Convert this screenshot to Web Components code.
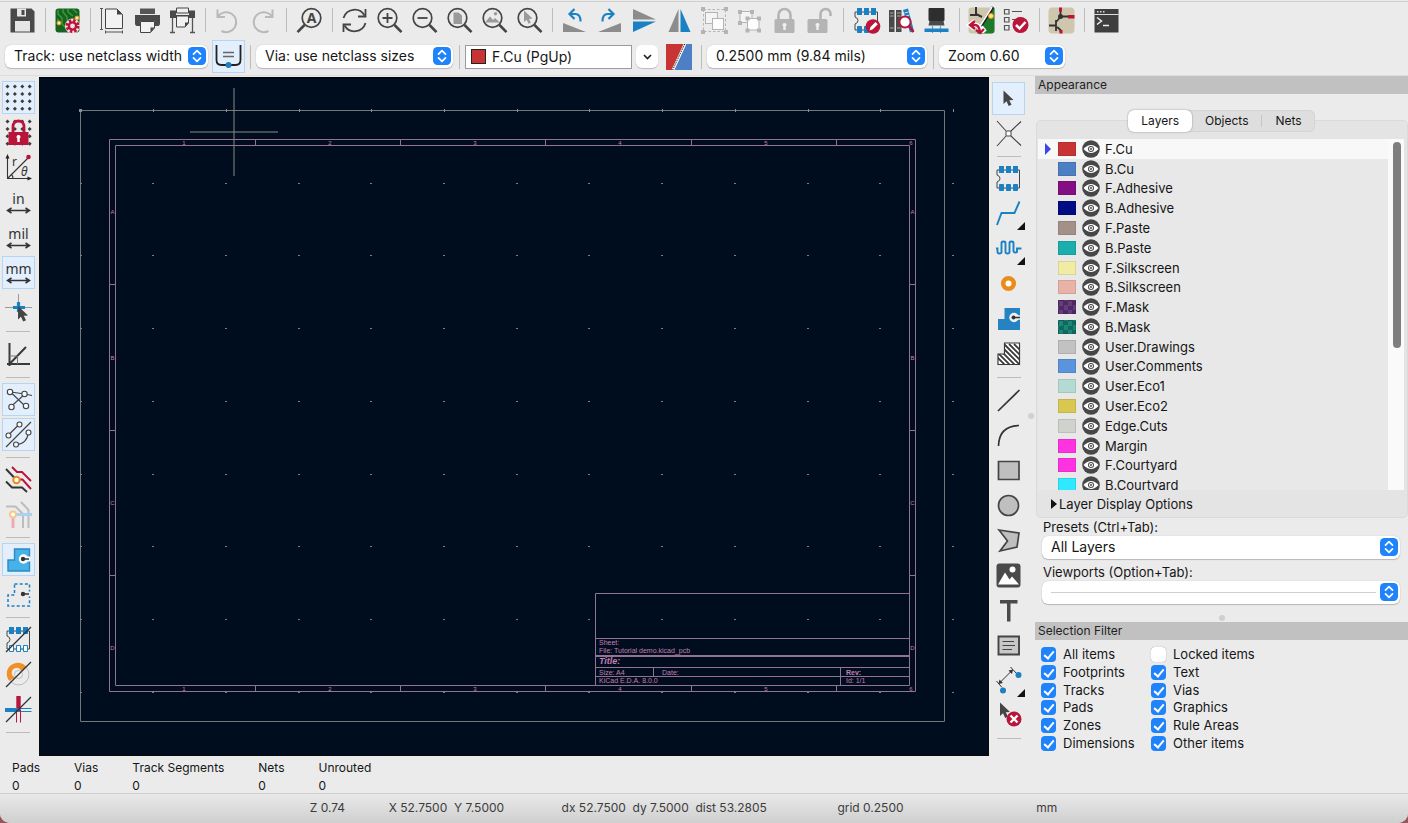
<!DOCTYPE html>
<html lang="en">
<head>
<meta charset="utf-8">
<title>PCB Editor</title>
<style>
html,body{margin:0;min-height:100%}
body{background:#94575b;font-family:Inter,"Liberation Sans",sans-serif;font-size:13px;color:#161616}
</style>
</head>
<body>
<pcb-editor></pcb-editor>

<script>
const DARK = '#454545', BLUE = '#1a81c4', RED = '#b9143a', PALE = '#b4b4b4';

/* Shared icon parts, all on a 27 x 27 grid */
const lens = inner => `<circle cx="11.5" cy="11" r="9.3" fill="none" stroke="${DARK}" stroke-width="1.7"/><path d="M18.5 18l7 7.2" stroke="${DARK}" stroke-width="2.6"/>${inner}`;
const footprint = (bottomFill) => `<path d="M3 5H24.500V23H2V17q3-1 3-3.500T2 10V5z" fill="none" stroke="${DARK}" stroke-width="1"/>
  <g fill="${BLUE}"><path d="M4 1h5v7H4zM11 1h5v7h-5zM18 1h5v7h-5z"/></g>
  <g fill="${bottomFill}" stroke="${BLUE}" stroke-width="1"><path d="M4.500 19.500h4v6h-4zM11.500 19.500h4v6h-4zM18.500 19.500h4v6h-4z"/></g>`;
const arrows = `<path d="M4 21.500H23M6.500 19L2.500 21.500L6.500 24M20.500 19L24.500 21.500L20.500 24" fill="none" stroke="#333" stroke-width="1.500"/>`;
const unit = t => `<text x="13.500" y="15" text-anchor="middle" font-family="Noto Sans,sans-serif" font-size="14" fill="#333">${t}</text>${arrows}`;
const dots = (() => { let s = ''; for (let y = 0; y < 4; y++) for (let x = 0; x < 4; x++) { const a = 2.5 + x * 7.4, b = 2.5 + y * 7.4; s += `<path d="M${a - 2} ${b}L${a} ${b - 2}L${a + 2} ${b}L${a} ${b + 2}z"/>`; } return `<g fill="#3c3c3c">${s}</g>`; })();
const padlock = (c, open) => `<rect x="3.500" y="12" width="20" height="14" rx="1.500" fill="${c}"/><path d="${open ? 'M16.500 12V7.500a5 5 0 0 1 10-1V9' : 'M7.500 12V8a6 6 0 0 1 12 0V12'}" fill="none" stroke="${c}" stroke-width="2.600"/><path d="M13.500 16a2 2 0 0 1 1.200 3.600V23h-2.400V19.600A2 2 0 0 1 13.500 16z" fill="#efefef"/>`;
const slash = `<path d="M1 26L26 1" stroke="#333" stroke-width="1.300"/>`;
const cursor = (x, y) => `<path transform="translate(${x} ${y})" d="M0 0L0 13.500L3 10.800L5.200 15.500L8 14.200L5.800 9.700L10 9.400z" fill="#454545"/>`;
const corner = `<path d="M30 22V30H22z" fill="#111"/>`;
const ic = {
  save: `<path fill="#4a4a4a" d="M1.500 1.500H22.500L25.500 4.500V25.500H1.500z"/><path fill="#e6e6e6" d="M6 14h15v10.500H6z"/><path fill="#e6e6e6" d="M8 1.500h9v8H8z"/><path fill="#4a4a4a" d="M12.500 3h3v5h-3z"/>`,
  setup: `<rect x="1.500" y="1.500" width="24" height="24" rx="3" fill="#14641f"/><path d="M4 3v4l4 4v6l4 4M9 2v3l4 5v3M14 2v3l5 4M4 12v3M19 2l4 4" stroke="#3f9a3f" stroke-width="1.400" fill="none"/><circle cx="5" cy="16" r="2" fill="#ffe9a8" stroke="#e8941a"/><circle cx="23" cy="11" r="2" fill="#ffe9a8" stroke="#e8941a"/>
    <circle cx="18.500" cy="19" r="7.600" fill="#f3dfe2"/><circle cx="18.500" cy="19" r="5.600" fill="none" stroke="${RED}" stroke-width="2.800" stroke-dasharray="2.400 2"/><circle cx="18.500" cy="19" r="3.600" fill="#f3dfe2" stroke="${RED}" stroke-width="2.400"/>`,
  page: `<path d="M6.500 2H18L23.500 7.500V21.500H6.500z" fill="#f2f2f2" stroke="#444"/><path d="M18 2V7.500H23.500z" fill="#444"/><path d="M2.500 1V23M1 1.500H4M1 22.500H4M6 25H24M6.500 23.500V26.500M23.500 23.500V26.500" stroke="#555" fill="none"/>`,
  print: `<path d="M6 1.500H21V7H6z" fill="#555"/><path d="M1 8h25v8q0 3-2 3h-3V14H6v5H3q-2 0-2-3z" fill="#4a4a4a"/><path d="M6.500 14.500H20.500V21L16.500 25.500H6.500z" fill="#f2f2f2" stroke="#444"/><path d="M20.500 20.500h-4v5z" fill="#444"/>`,
  plot: `<path d="M7.500 1H19.500V6H7.500z" fill="#f0f0f0" stroke="#444"/><path d="M1 3.500h6V8h13V3.500h6V11H1z" fill="#4a4a4a"/><path d="M7.500 9V20H16l3.500-4V9z" fill="#f2f2f2" stroke="#444"/><path d="M20 15.500h-4V20z" fill="#444"/><path d="M3.500 11V25M23.500 11V25M1 25.500H6M21 25.500H26" stroke="#555" fill="none" stroke-width="1.300"/>`,
  undo: `<path d="M3.500 2.500V10H11M4 9.500A10 10 0 1 1 7.500 24" fill="none" stroke="#b9b9b9" stroke-width="2"/>`,
  redo: `<path d="M23.500 2.500V10H16M23 9.500A10 10 0 1 0 19.500 24" fill="none" stroke="#b9b9b9" stroke-width="2"/>`,
  find: `<circle cx="15.500" cy="11" r="9.300" fill="none" stroke="${DARK}" stroke-width="1.700"/><path d="M8.500 18L1.500 25.200" stroke="${DARK}" stroke-width="2.600"/><text x="15.500" y="16" text-anchor="middle" font-family="Noto Sans,sans-serif" font-weight="700" font-size="14" fill="#444">A</text>`,
  refresh: `<path d="M2.500 11A11.500 11.500 0 0 1 23.500 8.500M24.500 16A11.500 11.500 0 0 1 3.500 18.500" fill="none" stroke="#444" stroke-width="1.800"/><path d="M24.500 2V9.500H17M2.500 25V17.500H10" fill="none" stroke="#444" stroke-width="1.800"/>`,
  zin: lens(`<path d="M11.500 6v10M6.500 11h10" stroke="#444" stroke-width="1.800"/>`),
  zout: lens(`<path d="M6.500 11h10" stroke="#444" stroke-width="1.800"/>`),
  zfit: lens(`<path d="M7.500 5.500h5l3.500 3v8.500h-8.500z" fill="#9a9a9a"/>`),
  zobj: lens(`<path d="M4 15.500l5-6 3 3.500 2-2 5 4.500z" fill="#9a9a9a"/><circle cx="14.500" cy="6.800" r="1.700" fill="#9a9a9a"/>`),
  zsel: lens(`<path transform="translate(8 3.500)" d="M0 0V11.500L2.600 9.300L4.600 13.200L6.800 12.200L5 8.400L8.500 8z" fill="#9a9a9a"/>`),
  rotl: `<path d="M2 16V25H25z" fill="#8c8c8c"/><path d="M10 7h4.500q5 0 5 7.500" fill="none" stroke="${BLUE}" stroke-width="2.200"/><path d="M13.500 2L8.500 7L13.500 12" fill="none" stroke="${BLUE}" stroke-width="2.200"/>`,
  rotr: `<path d="M25 16V25H2z" fill="#8c8c8c"/><path d="M16 7h-4.500q-5 0-5 7.500" fill="none" stroke="${BLUE}" stroke-width="2.200"/><path d="M12.500 2L17.500 7L12.500 12" fill="none" stroke="${BLUE}" stroke-width="2.200"/>`,
  fliph: `<path d="M2 2L25 12.500H2z" fill="#8c8c8c"/><path d="M2 25L25 14.500H2z" fill="${BLUE}"/>`,
  flipv: `<path d="M12.500 2V25H2.500z" fill="#8c8c8c"/><path d="M14.500 2V25H24.500z" fill="${BLUE}"/>`,
  group: `<rect x="2.500" y="2.500" width="22" height="22" fill="none" stroke="${PALE}" stroke-dasharray="2.500 2"/><g fill="${PALE}"><path d="M0 0h4v4H0zM23 0h4v4h-4zM0 23h4v4H0zM23 23h4v4h-4z"/></g><rect x="4.500" y="5.500" width="12" height="11" fill="#f4f4f4" stroke="${PALE}"/><rect x="11.500" y="11.500" width="11" height="11" fill="#fcfcfc" stroke="${PALE}"/>`,
  ungroup: `<rect x="4" y="4.500" width="12" height="11" fill="#f4f4f4" stroke="${PALE}"/><rect x="11.500" y="11.500" width="11.500" height="11.500" fill="#fcfcfc" stroke="${PALE}"/><g fill="${PALE}"><path d="M2 3h4v4H2zM14 3h4v4h-4zM2 14h4v4H2zM9.500 9.500h4v4h-4zM21 9.500h4v4h-4zM9.500 21.500h4v4h-4zM21 21.500h4v4h-4z"/></g>`,
  lock: padlock(PALE, false), unlock: `<g transform="translate(-2 0)">${padlock(PALE, true)}</g>`,
  fpedit: footprint(BLUE) + `<circle cx="20" cy="19.500" r="7.300" fill="${RED}"/><path d="M16.500 23.500l1-3.500 5-5 2.300 2.300-5 5z" fill="#fff"/>`,
  lib: `<path d="M1 3h5.500v22H1zM8 3h5.500v22H8z" fill="#4a4a4a"/><path d="M2 6h3.500M2 9h3.500M9 6h3.500M9 9h3.500M2 21h3.500M9 21h3.500" stroke="#aaa"/><path d="M15 3l5-1.500 6 22.500-4 1.500z" fill="${BLUE}"/><path d="M16.500 6l4-1M17.500 9l4-1" stroke="#cde"/><circle cx="17" cy="15" r="5.500" fill="#fff" stroke="${RED}" stroke-width="1.800"/><path d="M21 19l4.500 6" stroke="${RED}" stroke-width="2.600"/>`,
  chip: `<rect x="5.500" y="1" width="16" height="13" rx="1" fill="#2e2e2e"/><path d="M6.500 14h14l1 4.500H5.500z" fill="#4a4a4a"/><path d="M9.500 18.500v7.500M17.500 18.500v7.500" stroke="#5aa4d4" stroke-width="1.200"/><path d="M1.500 21.500h24v3.500h-24z" fill="${BLUE}"/>`,
  sync: `<rect x="0.500" y="0.500" width="26" height="26" rx="3" fill="#cfc6ae"/><path d="M26.500 1V23.500q0 3-3 3H9L24 .500z" fill="#1d7a2b"/><path d="M8 0V7l6 3M2 8h8" stroke="#333" stroke-width="2" fill="none"/><path d="M25 0L10.500 23" stroke="#222" stroke-width="3"/><path d="M24 0L9.500 23" stroke="#fff" stroke-width="1.500"/><circle cx="23" cy="9" r="2.500" fill="#ffe27a" stroke="#e8941a"/><path d="M7 14L1.500 18L7 22M2 18h5q5 0 6.500 8M13 20l4 5" fill="none" stroke="#fff" stroke-width="4.500"/><path d="M7 14L2 18L7 22M2 18h5q4 0 5 7M8 23l4 3 4-4" fill="none" stroke="${RED}" stroke-width="2.400"/>`,
  drc: `<g fill="none" stroke="#555" stroke-width="1.200"><path d="M1.500 2.500h4.500v4.500H1.500zM1.500 10.500h4.500v4.500H1.500zM1.500 18.500h4.500v4.500H1.500zM9 4.500H19M9 12.500h4"/></g><circle cx="17.500" cy="18" r="8" fill="${RED}"/><path d="M13 18l3.500 3.500 6-6.500" fill="none" stroke="#fff" stroke-width="2.500"/>`,
  sch: `<rect x="0.500" y="0.500" width="26" height="26" rx="4" fill="#cfc6ae"/><path d="M12.500 3V10L8.500 14.500M12.500 9.500H22M1 18.500H8M8 13V24M9 20l3.500 3v2" stroke="#333" stroke-width="1.800" fill="none"/><circle cx="12.500" cy="9.500" r="2.500" fill="#333"/><path d="M11 0.500h3v4h-3zM20 8h6.500v3.500H20zM11.500 23h3v3.500h-3z" fill="${RED}"/>`,
  term: `<path d="M1.500 2h24v23.500h-24z" fill="#3e3e3e"/><path d="M1.500 7.500h24" stroke="#ddd"/><path d="M4 4.700h1.500M7 4.700h1.500M10 4.700h1.500" stroke="#ddd" stroke-width="1.500"/><path d="M4 10.500l4.500 3.500L4 17.500M10 18.500h6" fill="none" stroke="#eee" stroke-width="1.500"/>`,
  ushape: `<path d="M1.500 2V17q0 5 5 5H20.500q5 0 5-5V2" fill="none" stroke="#222" stroke-width="1.800"/><path d="M8 9.500H19M8 13.500H19" stroke="#666" stroke-width="1.300"/><circle cx="13.500" cy="22" r="3" fill="${BLUE}"/>`,
  grid: dots,
  gridlock: dots + `<path d="M3.500 13h20v13h-20z" fill="${RED}"/><path d="M8 13V7.500a5.500 5.500 0 0 1 11 0V13" fill="none" stroke="${RED}" stroke-width="2.800"/><path d="M13.500 16a2 2 0 0 1 1.200 3.600V23h-2.400V19.600A2 2 0 0 1 13.500 16z" fill="#fff"/>`,
  polar: `<path d="M2.500 25V3M2.500 24.500H25M2.500 24.500L23 4M8 24.500a6 6 0 0 0-2-4.500" fill="none" stroke="#333" stroke-width="1.100"/><path d="M2.500 0L4.500 4.500H.500zM27 24.500L22.500 22.500V26.500z" fill="#222"/><circle cx="23.500" cy="3" r="2.300" fill="${RED}"/><text x="7" y="12" font-family="Noto Sans,sans-serif" font-size="12" fill="#333">r</text><text x="16" y="21.500" font-family="Noto Sans,sans-serif" font-style="italic" font-size="12" fill="#333">θ</text>`,
  inch: unit('in'), mil: unit('mil'), mm: unit('mm'),
  cross: `<path d="M13.500 0V20M0 13.500H27" stroke="#999"/><path d="M13.500 8V18M8 13.500H20" stroke="${BLUE}" stroke-width="3.200"/>` + cursor(13, 12),
  angle: `<path d="M4.500 2V25M2 23H25M4.500 23L21 6" fill="none" stroke="#3a3a3a" stroke-width="2"/><path d="M4.500 15H12.500V23" fill="none" stroke="#777"/>`,
  rats: `<path d="M5.500 6L20 20M20 8L6 20.500M5.500 6L20 8L27 9.500" stroke="#444" stroke-width="1.100" fill="none"/><g fill="#f6f9fc" stroke="#444" stroke-width="1.100"><circle cx="5" cy="6" r="2.700"/><circle cx="19.500" cy="8" r="2.700"/><circle cx="6.500" cy="21" r="2.700"/><circle cx="21" cy="20" r="2.700"/></g>`,
  ratc: `<path d="M1 26L26 1M3.500 14L14 3.500M11.500 23.500Q22 23 23.500 11" stroke="#444" stroke-width="1.200" fill="none"/><g fill="#f6f9fc" stroke="#444" stroke-width="1.100"><circle cx="3.500" cy="14.500" r="2.500"/><circle cx="14.500" cy="3.500" r="2.500"/><circle cx="11" cy="23.500" r="2.500"/><circle cx="23.500" cy="11.500" r="2.500"/></g>`,
  hc: `<path d="M7 1L12 6H17L26 15" fill="none" stroke="${RED}" stroke-width="1.900"/><path d="M1 3L11 13.500" stroke="#333" stroke-width="1.900"/><path d="M11 13.500H17.500L26 23" fill="none" stroke="${RED}" stroke-width="1.900"/><path d="M1 15.500L7 21.500H17L22 26" fill="none" stroke="#333" stroke-width="1.900"/><circle cx="11.500" cy="14" r="3.200" fill="#fff" stroke="#ea8c1c" stroke-width="2"/>`,
  netc: `<path d="M1 5.500H10.500L18 13V27M16 1L23.500 9V27" fill="none" stroke="#bdbdbd" stroke-width="2"/><path d="M8 13.500H27" stroke="#a9d2ee" stroke-width="3"/><path d="M8 14V27" stroke="#eeaab4" stroke-width="3"/><circle cx="8" cy="13.500" r="3" fill="#fff" stroke="#f5c98d" stroke-width="2"/>`,
  zfill: `<path d="M9.500 3H24.500V25H3V14H9.500z" fill="#46b2e8" stroke="#2b8ac4" stroke-width="1.400"/><circle cx="18.500" cy="13" r="4.700" fill="#fff"/><path d="M18 13H25.500" stroke="#fff" stroke-width="5"/><circle cx="18" cy="13" r="2.200" fill="#333"/><path d="M18 13H24" stroke="#333" stroke-width="1.500"/>`,
  zline: `<path d="M9.500 3H24.500V25H3V14H9.500z" fill="none" stroke="${BLUE}" stroke-width="1.500" stroke-dasharray="3 2.200"/><path d="M18 13H26" stroke="#ebebeb" stroke-width="5"/><circle cx="18" cy="13" r="2.200" fill="#333"/><path d="M18 13H24" stroke="#333" stroke-width="1.500"/>`,
  padsk: footprint('#fff') + slash,
  viask: `<circle cx="13.500" cy="13.500" r="10.500" fill="none" stroke="#bbb"/><path d="M4.300 19.800A11 11 0 1 1 21.300 5.700L16.500 10.500A5 5 0 1 0 10 16.500z" fill="#ef9126"/><circle cx="13.500" cy="13.500" r="4" fill="#efefef" stroke="#bbb"/>` + slash,
  trk: `<path d="M13.500 0V16" stroke="${RED}" stroke-width="4.400"/><path d="M0 14H14" stroke="${BLUE}" stroke-width="4"/><path d="M14 12.500H26.500M14 15.500H26.500" stroke="${BLUE}" stroke-width="1"/><path d="M11.500 14V26.500M15.500 14V26.500" stroke="${RED}" stroke-width="1"/>` + slash,
  select: cursor(8.5, 5.5),
  local: `<path d="M2 1L11.500 11.500M26 1.500L15.500 11.500M2 26L11.500 15.500M26 25.500L15.500 15.500" stroke="#444" stroke-width="1.100"/><rect x="11" y="11" width="5" height="5" rx="1" fill="#fff" stroke="#444"/>`,
  fp: footprint(BLUE),
  route: `<path d="M2 25L6.500 13H19.500L24.500 1.500" fill="none" stroke="${BLUE}" stroke-width="1.900"/>` + corner,
  tune: `<path d="M1 13.500H2.500V17q0 1.500 2 1.500t2-1.500V8q0-1.500 2-1.500t2 1.500V17q0 1.500 2 1.500t2-1.500V8q0-1.500 2-1.500t2 1.500V16q0 1.500 2 1.500T22 16V13.500H26.500" fill="none" stroke="${BLUE}" stroke-width="1.900"/>` + corner,
  via: `<circle cx="13.500" cy="13.500" r="5.300" fill="#fff" stroke="#ea8c1c" stroke-width="4.600"/>`,
  zone: `<path d="M9.500 3H25V25H3V14H9.500z" fill="#2583c4"/><circle cx="19" cy="12.500" r="4.700" fill="#f0f0f0"/><path d="M18 12.500H25" stroke="#f0f0f0" stroke-width="4.500"/><circle cx="18.500" cy="12.500" r="2" fill="#333"/><path d="M18 12.500H25" stroke="#333" stroke-width="1.500"/>`,
  rule: `<clipPath id="k"><path d="M9.500 3H24.500V24.500H3V14H9.500z"/></clipPath><g clip-path="url(#k)"><path d="M3 3h22v22H3z" fill="#fff"/><path d="M-7 8l18 18M-2 8l18 18M1 6l20 20M4 4l24 24M9 4l20 20M14 4l20 20M19 4l10 10" stroke="#3a3a3a" stroke-width="1.800"/></g><path d="M9.500 3H24.500V24.500H3V14H9.500z" fill="none" stroke="#3a3a3a" stroke-width="1.200"/>`,
  line: `<path d="M3 24L24.500 3" stroke="#333" stroke-width="1.700"/>`,
  arc: `<path d="M3.500 24Q4 4 24 3.500" fill="none" stroke="#333" stroke-width="1.700"/>`,
  rect: `<path d="M3.500 4.500H24V22.500H3.500z" fill="#bfbfbf" stroke="#444" stroke-width="1.700"/>`,
  circle: `<circle cx="13.500" cy="13.500" r="10" fill="#bfbfbf" stroke="#444" stroke-width="1.700"/>`,
  poly: `<path d="M4 3L24 6L22 20L5 24L12.500 14z" fill="#bfbfbf" stroke="#444" stroke-width="1.700"/>`,
  image: `<rect x="1.500" y="1.500" width="24" height="24" rx="3" fill="#4a4a4a"/><path d="M3 22.500L10 10.500L14.500 17.500L17 14.500L24 22.500z" fill="#fff"/><circle cx="17.500" cy="7.500" r="3" fill="#fff"/>`,
  text: `<path d="M5 3H22.500V6.500H15.500V24.500H12V6.500H5z" fill="#4a4a4a"/>`,
  tbox: `<path d="M3.500 4.500H24V22.500H3.500z" fill="#c8c8c8" stroke="#444" stroke-width="1.900"/><path d="M7.500 9.500H19M7.500 13.500H20M7.500 17.500H17" stroke="#444" stroke-width="1.200"/>`,
  dim: `<path d="M4.500 16L17 3.500M1.500 14L7 20.500M15.500 0L22 7" stroke="#333" stroke-width="1"/><path d="M3.500 17l1-4.500 3.500 3.500zM18 2.500l-1 4.500-3.500-3.500z" fill="#333"/><circle cx="23.500" cy="8" r="3" fill="${BLUE}"/><circle cx="8" cy="23.500" r="3" fill="${BLUE}"/>` + corner,
  del: cursor(5, 0.5) + `<circle cx="19" cy="17" r="7.500" fill="${RED}"/><path d="M15.500 13.500l7 7M22.500 13.500l-7 7" stroke="#fff" stroke-width="2.300"/>`
};

const define = (name, html, setup) => customElements.define(name, class extends HTMLElement {
  connectedCallback() {
    if (this.shadowRoot) return;
    const t = document.createElement('template');
    t.innerHTML = typeof html === 'function' ? html(this) : html;
    this.attachShadow({ mode: 'open' }).append(t.content.cloneNode(true));
    if (setup) setup(this);
  }
});

/* ---- Toolbar parts ---- */
define('tool-button', el => `<style>
:host{display:block;width:35px;height:35px;flex:none}
button{display:block;box-sizing:border-box;width:33px;height:33px;margin:1px;padding:2px;border:1px solid transparent;background:none}
:host([active]) button{background:#e3effc;border-color:#b5d6f3}
svg{display:block;width:27px;height:27px;overflow:visible}
</style><button type="button" aria-label="${el.getAttribute('label')}"><svg viewBox="0 0 27 27" aria-hidden="true">${ic[el.getAttribute('icon')]}</svg></button>`);

define('tool-separator', `<style>
:host{display:flex;flex:none;align-items:center;justify-content:center;width:10px;height:24px}
:host([wide]){width:12px}
:host([row]){width:24px;height:10px}
:host([row][wide]){height:12px}
i{display:block;width:1px;height:24px;background:#bcbcbc}
:host([row]) i{width:24px;height:1px}
</style><i></i>`);

define('tool-bar', `<style>
:host{display:flex;align-items:center}
:host([vertical]){flex-direction:column}
</style><slot></slot>`);

/* ---- Pop-up menu ---- */
define('pop-up', el => `<style>
:host{display:block;position:relative;flex:none}
select{appearance:none;display:block;box-sizing:border-box;width:100%;height:23px;margin:0;padding:0 24px 1px 9px;border:0;border-radius:6px;background:#fff;box-shadow:0 1px 1px #0003,0 0 1px #0004;font:14px/20px Inter,sans-serif;color:#161616}
svg{position:absolute;right:2px;top:2px;width:18px;height:18px;pointer-events:none}
hr{position:absolute;left:9px;right:24px;top:11px;height:1px;margin:0;border:0;background:#cfcfcf}
</style><select aria-label="${el.getAttribute('label')}"><option>${el.getAttribute('value') || ''}</option></select>
${el.hasAttribute('value') ? '' : '<hr>'}
<svg viewBox="0 0 18 18" aria-hidden="true"><rect width="18" height="18" rx="4.500" fill="#1f83fb"/><path d="M5.500 7.200L9 3.700L12.500 7.200M5.500 10.800L9 14.300L12.500 10.800" fill="none" stroke="#fff" stroke-width="1.700" stroke-linecap="round" stroke-linejoin="round"/></svg>`);

/* ---- Active layer box ---- */
define('layer-combo', `<style>
:host{display:flex;align-items:center;gap:4px;flex:none}
label{display:flex;align-items:center;gap:6px;box-sizing:border-box;width:167px;height:24px;padding-left:5px;border:1px solid #9b9b9b;background:#fff}
i{flex:none;box-sizing:border-box;width:15px;height:15px;border:1px solid #222;background:#c83434}
input{min-width:0;flex:1;padding:0;border:0;outline:0;background:none;font:14px/20px Inter,sans-serif;color:#161616}
button{width:22px;height:23px;padding:0;border:0;border-radius:6px;background:#fff;box-shadow:0 1px 1px #0003}
svg{display:block;margin:auto}
</style><label><i></i><input aria-label="Active layer" value="F.Cu (PgUp)" readonly></label>
<button type="button" aria-label="Choose layer"><svg width="9" height="6" viewBox="0 0 9 6"><path d="M1 1l3.500 3.500L8 1" fill="none" stroke="#222" stroke-width="1.700"/></svg></button>`);

define('layer-pair', `<style>
:host{display:block;flex:none;margin:0 3px 0 5px}
button{display:block;padding:0;border:0;background:none}svg{display:block}
</style><button type="button" aria-label="Layer pair"><svg width="26" height="26" viewBox="0 0 26 26"><path d="M0 0H26V26H0z" fill="#c83434"/><path d="M19.500 0H26V26H7.500z" fill="#4d7fc4"/><path d="M19 0L7 26" stroke="#fff" stroke-width="2.600"/><path d="M18.700 0L6.700 26" stroke="#222" stroke-width="1" stroke-dasharray="1.500 1"/></svg></button>`);

/* ---- Drawing sheet ---- */
const sheet = () => {
  let s = '';
  for (let r = 0; r < 9; r++) for (let c = 0; c < 13; c++) {
    const x = Math.round(80.5 + c * 72.7), y = Math.round(110 + r * 72.7);
    s += r ? `<rect x="${x - 1}" y="${y}" width="2" height="1" fill="#7d8186"/>` : `<rect x="${x}" y="109" width="1" height="3" fill="#8b8f94"/>`;
  }
  [184, 330, 475, 620, 766, 911].forEach((x, i) => { s += `<text x="${x}" y="145">${i + 1}</text><text x="${x}" y="691">${i + 1}</text>`; });
  [212, 358, 503, 648].forEach((y, i) => { s += `<text x="112.500" y="${y + 2}">${'ABCD'[i]}</text><text x="912.500" y="${y + 2}">${'ABCD'[i]}</text>`; });
  const tx = [255, 400, 545, 691, 836].map(x => `M${x}.500 139.500v6M${x}.500 685.500v6`).join('');
  const ty = [284, 430, 575].map(y => `M109.500 ${y}.500h6M909.500 ${y}.500h6`).join('');
  return `<path d="M80.500 110.500H944.500V721.500H80.500z" stroke="#74777c"/><path d="M79 109h3v3h-3z" fill="#8b8f94"/>
  <path d="M109.500 139.500H915.500V691.500H109.500zM115.500 145.500H909.500V685.500H115.500z${tx}${ty}M595.500 685.500V593.500H909.500M595.500 638.500H909.500M595.500 667.500H909.500M595.500 676.500H909.500M653.500 667.500V676.500M840.500 667.500V685.500" stroke="#93738f"/>
  <path d="M595.500 656H909.500" stroke="#93738f" stroke-width="2"/>
  <path d="M234 88V176M190 132H278" stroke="#8b8a84"/>
  <g fill="#c27fb4" stroke="none"><g font-size="6" text-anchor="middle">${s}</g>
  <g font-size="7"><text x="599" y="645">Sheet:</text><text x="599" y="653">File: Tutorial demo.kicad_pcb</text><text x="599" y="664" font-size="9" font-weight="700" font-style="italic">Title:</text>
  <text x="599" y="675">Size: A4</text><text x="662" y="675">Date:</text><text x="846" y="675" font-weight="700">Rev:</text><text x="599" y="683">KiCad E.D.A. 8.0.0</text><text x="846" y="683">Id: 1/1</text></g></g>`;
};
define('board-canvas', () => `<style>
:host{display:block;position:relative;min-width:0;box-sizing:border-box;margin-top:1px;border:1px solid #0a0a0a;border-top-color:#000;background:#000d1f;overflow:hidden}
svg{position:absolute;inset:-1px;width:calc(100% + 2px);height:calc(100% + 2px)}
text{font-family:"Liberation Sans",sans-serif}
</style><svg viewBox="39 77 950 679" fill="none" role="img" aria-label="Board drawing sheet">${sheet()}</svg>`);

/* ---- Appearance panel ---- */
define('layer-row', el => `<style>
:host{display:flex;align-items:center;padding-left:6px;min-height:0}
:host([current]){background:#f8f8f8}
.mark{width:14px;height:12px;flex:none}
.sw{width:18px;height:14px;flex:none;box-sizing:border-box;border:1px solid #00000018;background:${el.getAttribute('color')}}
:host([checker]) .sw{background:repeating-conic-gradient(#0002 0 25%,#fff1 0 50%) 0 0/9px 9px,${el.getAttribute('color')}}
button{flex:none;margin:0 5px 0 6px;padding:0;border:0;background:none}
svg{display:block}
span{font-size:13px;line-height:18px;white-space:nowrap}
</style><svg class="mark" viewBox="0 0 14 12">${el.hasAttribute('current') ? '<path d="M1 0V12L7 6z" fill="#3c46e8"/>' : ''}</svg><i class="sw"></i>
<button type="button" aria-label="Show ${el.getAttribute('name')}"><svg width="18" height="18" viewBox="0 0 18 18"><circle cx="9" cy="9" r="8.800" fill="#474747"/><path d="M1.500 9Q9 1 16.500 9Q9 17 1.500 9z" fill="#fff"/><circle cx="9" cy="9" r="3" fill="#474747"/><circle cx="9" cy="9" r="2" fill="#fff"/><circle cx="9" cy="9" r="1" fill="#474747"/></svg></button><span>${el.getAttribute('name')}</span>`);

const layers = [['F.Cu', '#c83434'], ['B.Cu', '#4d7fc4'], ['F.Adhesive', '#840f84'], ['B.Adhesive', '#000b84'], ['F.Paste', '#a39189'], ['B.Paste', '#1caead'], ['F.Silkscreen', '#f1eca3'], ['B.Silkscreen', '#e8b2a7'], ['F.Mask', '#5a2f72', 1], ['B.Mask', '#0f7a6c', 1], ['User.Drawings', '#c2c2c2'], ['User.Comments', '#5994dc'], ['User.Eco1', '#b4dbd2'], ['User.Eco2', '#d8c852'], ['Edge.Cuts', '#d0d2cd'], ['Margin', '#ff32e2'], ['F.Courtyard', '#ff32e2'], ['B.Courtyard', '#2ee9ff']];
define('layer-list', () => `<style>
:host{display:flex;height:351px;overflow:hidden}
.rows{flex:1;display:grid;grid-template-rows:repeat(18,1fr);height:356px;background:#e8e8e8}
.track{width:16px;box-sizing:border-box;padding:3px 3px 0 5px;background:#fafafa}
.thumb{height:206px;border-radius:4px;background:#7e7e7e}
</style><div class="rows">${layers.map(([n, c, k], i) => `<layer-row name="${n}" color="${c}"${i ? '' : ' current'}${k ? ' checker' : ''}></layer-row>`).join('')}</div>
<div class="track"><div class="thumb"></div></div>`);

define('pane-header', `<style>:host{display:block;height:18px;padding-left:3px;background:#c1c1c1;font-size:12px;line-height:18px;color:#222}</style><slot></slot>`);

define('tab-strip', `<style>
:host{display:flex;border-radius:6px;background:#dedede;box-shadow:inset 0 0 0 1px #d4d4d4}
button{height:22px;padding:0 13px;border:0;background:none;font:12px/22px Inter,sans-serif;color:#161616}
.on{border-radius:6px;background:#fff;box-shadow:0 0 2px #0006}
i{width:1px;height:12px;margin:5px 0;background:#c6c6c6}
</style><button type="button" class="on">Layers</button><button type="button">Objects</button><i></i><button type="button">Nets</button>`);

define('appearance-pane', `<style>
:host{display:block}
tab-strip{position:relative;width:max-content;margin:16px auto 0}
.box{margin:-12px 0 0 1px;padding:18px 3px 0 1px;border:1px solid #dadada;border-radius:5px;background:#e4e4e4}
.more{display:flex;align-items:center;gap:1px;height:27px;padding:0 0 0 12px;border:0;background:none;font:13px/18px Inter,sans-serif;color:#161616}
.field{display:block;padding:0 8px 0 7px}
.label{display:block;height:18px;padding-left:1px;font-size:13px;line-height:18px}
.field + .field{margin-top:4px}
.dot{width:6px;height:6px;margin:11px auto 1px;border-radius:50%;background:#cfcfcf}
</style><pane-header>Appearance</pane-header><tab-strip></tab-strip>
<div class="box"><layer-list></layer-list>
<button class="more" type="button"><svg width="8" height="12" viewBox="0 0 8 12"><path d="M1 1V11L7 6z" fill="#111"/></svg>Layer Display Options</button></div>
<div class="field"><span class="label">Presets (Ctrl+Tab):</span><pop-up label="Presets" value="All Layers"></pop-up></div>
<div class="field"><span class="label">Viewports (Option+Tab):</span><pop-up label="Viewports"></pop-up></div>
<div class="dot"></div>`);

const filters = [['All items', 'Locked items'], ['Footprints', 'Text'], ['Tracks', 'Vias'], ['Pads', 'Graphics'], ['Zones', 'Rule Areas'], ['Dimensions', 'Other items']];
define('selection-filter', () => `<style>
:host{display:block}
form{display:grid;grid-template-columns:110px 1fr;grid-template-rows:repeat(6,1fr);height:106px;margin:6px 0 0 6px}
label{display:flex;align-items:center;gap:7px;font-size:13px;line-height:17px;white-space:nowrap}
input{appearance:none;position:relative;flex:none;width:15px;height:15px;margin:0;border-radius:4px;background:#fff;box-shadow:0 0 1px #0007}
input:checked{background:#1f83fb;box-shadow:none}
input:checked::after{content:"";position:absolute;left:5px;top:2px;width:4px;height:8px;border:solid #fff;border-width:0 2px 2px 0;transform:rotate(40deg)}
</style><pane-header>Selection Filter</pane-header><form>${filters.flat().map(n => `<label><input type="checkbox"${n === 'Locked items' ? '' : ' checked'}>${n}</label>`).join('')}</form>`);

/* ---- Bottom bars ---- */
define('message-panel', `<style>
:host{display:block;height:37px}
dl{display:flex;gap:34px;margin:0;padding:3px 12px 0}
dt,dd{margin:0;font-size:12px;line-height:18px}
</style><dl>${['Pads', 'Vias', 'Track Segments', 'Nets', 'Unrouted'].map(n => `<div><dt>${n}</dt><dd>0</dd></div>`).join('')}</dl>`);

define('status-bar', `<style>
:host{display:grid;grid-template-columns:79fr 173fr 276fr 199fr 372fr;align-items:center;box-sizing:border-box;height:30px;padding:0 0 2px 22%;border-top:1px solid #cdcdcd;background:linear-gradient(#e9e9e9,#cfcfcf);font-size:12px;line-height:16px;color:#3c3c3c}
span{white-space:pre}
</style><span>Z 0.74</span><span>X 52.7500  Y 7.5000</span><span>dx 52.7500  dy 7.5000  dist 53.2805</span><span>grid 0.2500</span><span>mm</span>`);

/* ---- Application frame ---- */
const bar = list => list.map(k => k === '|' ? '<tool-separator></tool-separator>' : k === '||' ? '<tool-separator wide></tool-separator>' : `<tool-button icon="${k}" label="${k}"></tool-button>`).join('');
const col = list => list.map(k => k === '|' ? '<tool-separator row></tool-separator>' : k === '||' ? '<tool-separator row wide></tool-separator>' : `<tool-button icon="${k.replace('*', '')}" label="${k.replace('*', '')}"${k.includes('*') ? ' active' : ''}></tool-button>`).join('');

define('pcb-editor', () => `<style>
:host{display:flex;flex-direction:column;min-height:100vh;overflow:hidden;border-radius:0 0 10px 10px;background:#ebebeb}
.main{box-sizing:border-box;height:37px;padding-left:5px;border-top:1px solid #cfcfcf;margin-top:1px}
.options{box-sizing:border-box;height:38px;gap:3px;padding-left:5px;border-bottom:1px solid #dedede}
.options tool-button{width:33px}
.options tool-separator{width:1px;margin:0 2px 0 3px}
.track{width:203px}.via{width:197px}.grid{width:220px}.zoom{width:126px}
.work{flex:1;display:grid;grid-template-columns:39px minmax(0,1fr) 46px 373px}
.left{padding:4px 3px 0 0}
.right{padding:5px 7px 0 0;position:relative}
.grip{position:absolute;right:1px;top:337px;width:6px;height:6px;border-radius:50%;background:#d0d0d0}
</style>
<tool-bar class="main" role="toolbar">${bar(['save', '|', 'setup', '|', 'page', 'print', 'plot', '|', 'undo', 'redo', '||', 'find', '|', 'refresh', 'zin', 'zout', 'zfit', 'zobj', 'zsel', '|', 'rotl', 'rotr', 'fliph', 'flipv', 'group', 'ungroup', 'lock', 'unlock', '||', 'fpedit', 'lib', 'chip', '|', 'sync', 'drc', '|', 'sch', '|', 'term'])}</tool-bar>
<tool-bar class="options" role="toolbar"><pop-up class="track" label="Track width" value="Track: use netclass width"></pop-up><tool-button icon="ushape" label="Automatic track width" active></tool-button><tool-separator></tool-separator><pop-up class="via" label="Via size" value="Via: use netclass sizes"></pop-up><tool-separator></tool-separator><layer-combo></layer-combo><layer-pair></layer-pair><tool-separator></tool-separator><pop-up class="grid" label="Grid" value="0.2500 mm (9.84 mils)"></pop-up><tool-separator></tool-separator><pop-up class="zoom" label="Zoom" value="Zoom 0.60"></pop-up></tool-bar>
<div class="work">
<tool-bar class="left" vertical>${col(['grid*', 'gridlock', 'polar', 'inch', 'mil', 'mm*', 'cross', '||', 'angle', '|', 'rats*', 'ratc*', '|', 'hc', 'netc', '|', 'zfill*', 'zline', '|', 'padsk', 'viask', 'trk', '|'])}</tool-bar>
<board-canvas></board-canvas>
<tool-bar class="right" vertical>${col(['select*', 'local', '|', 'fp', 'route', 'tune', 'via', 'zone', 'rule', '||', 'line', 'arc', 'rect', 'circle', 'poly', 'image', 'text', 'tbox', 'dim', 'del', '|'])}<i class="grip"></i></tool-bar>
<aside><appearance-pane></appearance-pane><selection-filter></selection-filter></aside>
</div>
<message-panel></message-panel><status-bar></status-bar>`);
</script>
</body>
</html>
